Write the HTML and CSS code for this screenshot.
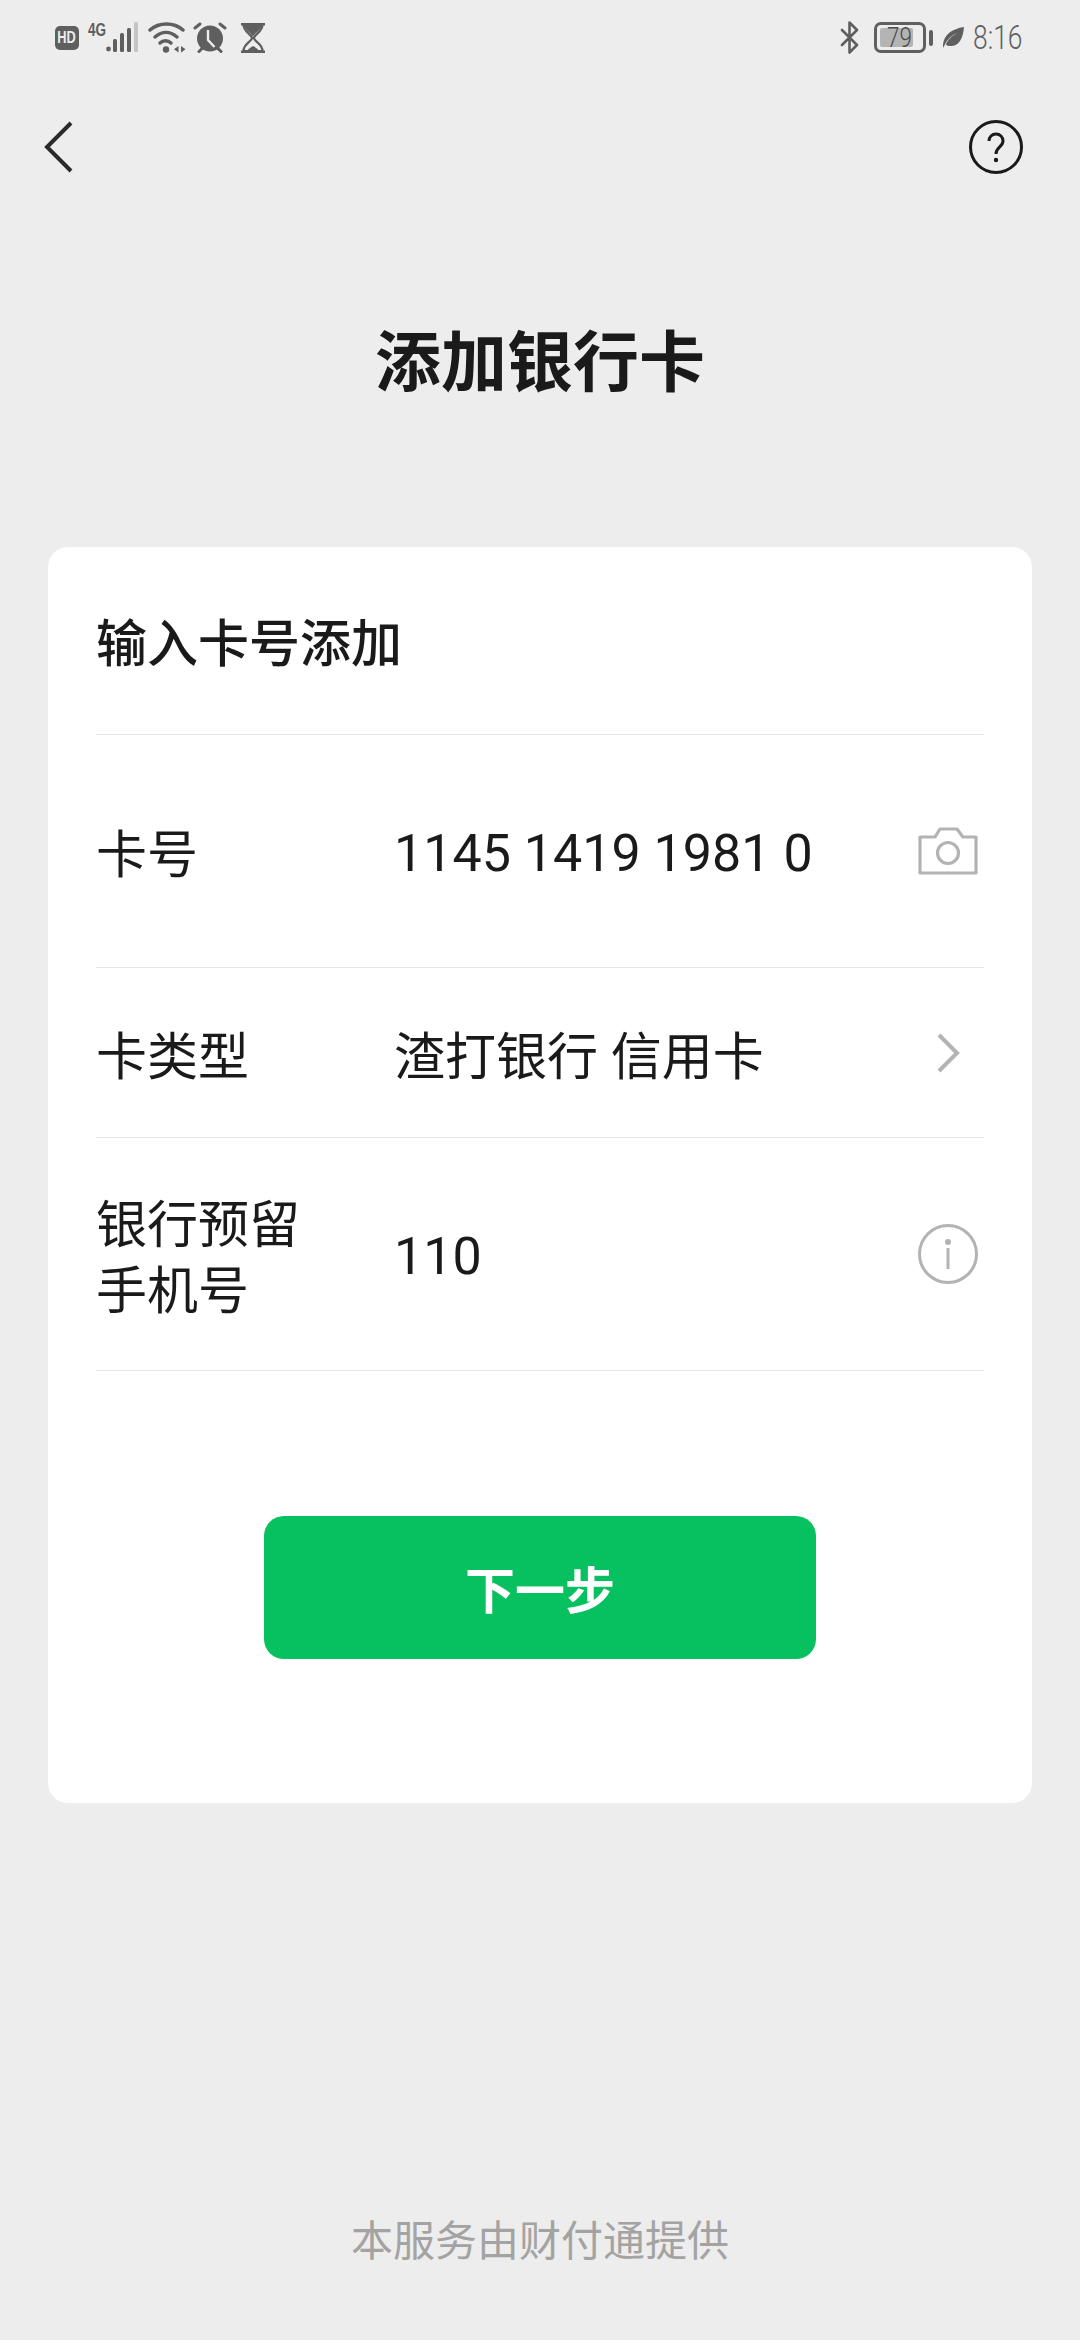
FILE: index.html
```html
<!DOCTYPE html>
<html lang="zh-CN">
<head>
  <meta charset="UTF-8">
  <meta name="viewport" content="width=device-width, initial-scale=1.0">
  <title>添加银行卡</title>
  <link rel="stylesheet" href="styles.css">
</head>
<body>
  <div class="status-bar">
    <div class="status-left">
      <div class="hd-badge"><span class="hd-text">HD</span></div>
      <div class="signal">
        <span class="net-text">4G</span>
        <svg width="32" height="31" viewBox="0 0 32 31">
          <circle cx="2.500" cy="27" r="2.400" fill="#5f5f5f"/>
          <rect x="7" y="17" width="4" height="13" rx="1.500" fill="#5f5f5f"/>
          <rect x="14" y="11" width="4" height="19" rx="1.500" fill="#5f5f5f"/>
          <rect x="21" y="6" width="4" height="24" rx="1.500" fill="#5f5f5f"/>
          <rect x="28" y="0" width="4" height="30" rx="1.500" fill="#c4c4c4"/>
        </svg>
      </div>
      <svg class="icon-wifi" width="38" height="31" viewBox="0 0 38 31">
        <path d="M2 8C11 0 26 0 35 8M7 15C14 9 22 9 29 15M12 21C15 18 20 18 23 21" fill="none" stroke="#5f5f5f" stroke-width="3.400" stroke-linecap="round"/>
        <circle cx="18" cy="27.500" r="3.200" fill="#5f5f5f"/>
        <path d="M30.500 24v6.500l-4.500-3.200zM33 24v6.500l4.500-3.200z" fill="#5f5f5f"/>
      </svg>
      <svg class="icon-alarm" width="34" height="31" viewBox="0 0 34 31">
        <circle cx="17" cy="16.500" r="13" fill="#5f5f5f"/>
        <path d="M15 8v10l6.500 7" fill="none" stroke="#ededed" stroke-width="2.400"/>
        <path d="M2 6l5-4M32 6l-5-4M6 29.500l3-3M28 29.500l-3-3" stroke="#5f5f5f" stroke-width="3" stroke-linecap="round"/>
      </svg>
      <svg class="icon-glass" width="24" height="30" viewBox="0 0 24 30">
        <path d="M0 1.200h24M0 28.800h24" stroke="#5f5f5f" stroke-width="2.400"/>
        <path d="M2.500 2c0 6 6 8 8.500 12.500v1c-2.500 4.500-8.500 6-8.500 12.500h19c0-6.500-6-8-8.500-12.500v-1C15.500 10 21.500 8 21.500 2z" fill="none" stroke="#5f5f5f" stroke-width="2.200"/>
        <path d="M3 2h18c-1 5-6 7-9 11.500C9 9 4 7 3 2zM6 28c1-2 4-4 6-5 2 1 5 3 6 5z" fill="#5f5f5f"/>
      </svg>
    </div>
    <div class="status-right">
      <svg class="icon-bt" width="20" height="33" viewBox="0 0 20 33">
        <path d="M2 9l15 15-7.500 7.500v-30L17 9 2 24" fill="none" stroke="#5f5f5f" stroke-width="2.600" stroke-linejoin="round" stroke-linecap="round"/>
      </svg>
      <div class="battery">
        <div class="battery-body">
          <div class="battery-level"></div>
          <span class="battery-num">79</span>
        </div>
        <div class="battery-cap"></div>
      </div>
      <svg class="icon-leaf" width="21" height="21" viewBox="0 0 22 22">
        <path d="M22 0C21 12 17 20 8 20 6 20 4 19.500 3 18 7 11 11 8 16 6 10 8 5 12 1.500 19.500L0 22C-1 10 8 2 22 0z" fill="#5f5f5f"/>
      </svg>
      <span class="status-time">8:16</span>
    </div>
  </div>

  <div class="nav-bar">
    <svg width="30" height="54" viewBox="0 0 30 54">
      <path d="M27 3L3 27l24 24" fill="none" stroke="#2a2a2a" stroke-width="4"/>
    </svg>
    <svg width="54" height="54" viewBox="0 0 54 54">
      <circle cx="27" cy="27" r="25.500" fill="none" stroke="#1a1a1a" stroke-width="3"/>
      <path d="M20 21c0-4 3-7 7-7s7 3 7 7c0 6-7 6-7 13" fill="none" stroke="#1a1a1a" stroke-width="3"/>
      <circle cx="27" cy="40" r="2.200" fill="#1a1a1a"/>
    </svg>
  </div>

  <h1 class="page-title">添加银行卡</h1>

  <div class="card">
    <div class="card-header">输入卡号添加</div>

    <div class="form-row row-number">
      <span class="row-label">卡号</span>
      <span class="row-value">1145 1419 1981 0</span>
      <svg class="row-icon" width="60" height="48" viewBox="0 0 60 48">
        <path d="M2 10h15l5-8h17l6 8h13v36H2z" fill="none" stroke="#b3b3b3" stroke-width="3.200" stroke-linejoin="round"/>
        <circle cx="30" cy="26" r="10.500" fill="none" stroke="#b3b3b3" stroke-width="3.200"/>
      </svg>
    </div>

    <div class="form-row row-type">
      <span class="row-label">卡类型</span>
      <span class="row-value value-text">渣打银行 信用卡</span>
      <svg class="row-icon" width="60" height="40" viewBox="0 0 60 40">
        <path d="M21 2l18 18-18 18" fill="none" stroke="#b3b3b3" stroke-width="4"/>
      </svg>
    </div>

    <div class="form-row row-phone">
      <span class="row-label">银行预留<br>手机号</span>
      <span class="row-value">110</span>
      <svg class="row-icon" width="60" height="60" viewBox="0 0 60 60">
        <circle cx="30" cy="30" r="28.500" fill="none" stroke="#b3b3b3" stroke-width="3"/>
        <circle cx="30" cy="18" r="3" fill="#b3b3b3"/>
        <rect x="28.500" y="24" width="3" height="21" fill="#b3b3b3"/>
      </svg>
    </div>

    <div class="btn-wrap">
      <div class="next-button">下一步</div>
    </div>
  </div>

  <div class="footer-note">本服务由财付通提供</div>
</body>
</html>
```

FILE: styles.css
```css
:root {
  --bg-gray: #ededed;
  --text-dark: #1a1a1a;
  --icon-gray: #5f5f5f;
  --divider: #e6e6e6;
  --wechat-green: #07c160;
}

body {
  margin: 0;
  width: 1080px;
  height: 2340px;
  background-color: var(--bg-gray);
  color: var(--text-dark);
  font-family: "Noto Sans CJK SC", Roboto, sans-serif;
  overflow: hidden;
}

.status-bar {
  display: flex;
  justify-content: space-between;
  align-items: center;
  height: 75px;
  padding: 0 56px 0 55px;
}

.status-left,
.status-right {
  display: flex;
  align-items: center;
}

.hd-badge {
  display: flex;
  align-items: center;
  justify-content: center;
  width: 24px;
  height: 24px;
  background: var(--icon-gray);
  border-radius: 5px;
}

.hd-text {
  font-family: "Liberation Sans", sans-serif;
  font-size: 16px;
  font-weight: 700;
  line-height: 16px;
  color: #ededed;
  transform: scaleX(0.8);
}

.signal {
  display: flex;
  align-items: flex-start;
  height: 31px;
  margin-left: 9px;
}

.net-text {
  width: 18px;
  font-family: "Liberation Sans", sans-serif;
  font-size: 18px;
  font-weight: 700;
  line-height: 16px;
  color: var(--icon-gray);
  white-space: nowrap;
  transform: scaleX(0.75);
  transform-origin: left;
}

.icon-wifi { margin-left: 10px; }
.icon-alarm { margin-left: 7px; }
.icon-glass { margin-left: 14px; }

.icon-bt { margin-right: 14px; }

.battery {
  display: flex;
  align-items: center;
  margin-right: 10px;
}

.battery-body {
  position: relative;
  box-sizing: border-box;
  width: 52px;
  height: 31px;
  border: 3px solid var(--icon-gray);
  border-radius: 7px;
}

.battery-level {
  width: 33px;
  height: 19px;
  margin: 3px;
  background: #b4b4b4;
  border-radius: 2px;
}

.battery-num {
  position: absolute;
  left: 10px;
  top: 0;
  font-family: Roboto, sans-serif;
  font-size: 28px;
  font-weight: 300;
  line-height: 25px;
  color: #4a4a4a;
  transform: scaleX(0.8);
  transform-origin: left;
}

.battery-cap {
  width: 4px;
  height: 16px;
  margin-left: 3px;
  background: var(--icon-gray);
  border-radius: 2px;
}

.status-time {
  width: 51px;
  margin-left: 9px;
  font-family: Roboto, sans-serif;
  font-size: 33px;
  font-weight: 300;
  color: var(--icon-gray);
  white-space: nowrap;
  transform: scaleX(0.8);
  transform-origin: left;
}

.nav-bar {
  display: flex;
  justify-content: space-between;
  align-items: center;
  height: 56px;
  margin-top: 44px;
  padding: 0 57px 0 44px;
}

.page-title {
  margin: 136px 0 0;
  font-size: 66px;
  font-weight: 700;
  line-height: 92px;
  text-align: center;
  color: var(--text-dark);
}

.card {
  box-sizing: border-box;
  height: 1256px;
  margin: 144px 48px 0;
  padding: 0 48px;
  background: white;
  border-radius: 20px;
}

.card-header {
  box-sizing: border-box;
  display: flex;
  align-items: center;
  height: 188px;
  padding-bottom: 2px;
  font-size: 51px;
  font-weight: 500;
  border-bottom: 1px solid var(--divider);
}

.form-row {
  display: flex;
  align-items: center;
  border-bottom: 1px solid var(--divider);
  font-size: 51px;
}

.row-number { height: 232px; }
.row-type { height: 169px; }
.row-phone { height: 232px; }

.row-label {
  width: 298px;
  flex-shrink: 0;
  line-height: 66px;
}

.row-value {
  flex: 1;
  padding-top: 5px;
  font-family: Roboto, "Noto Sans CJK SC", sans-serif;
  font-size: 52px;
}

.value-text {
  padding-top: 0;
  font-size: 51px;
}

.row-icon {
  flex-shrink: 0;
  margin-right: 6px;
}

.btn-wrap {
  display: flex;
  justify-content: center;
  padding-top: 145px;
}

.next-button {
  display: flex;
  align-items: center;
  justify-content: center;
  width: 552px;
  height: 143px;
  padding-bottom: 2px;
  box-sizing: border-box;
  background: var(--wechat-green);
  border-radius: 20px;
  color: white;
  font-size: 50px;
  font-weight: 700;
}

.footer-note {
  margin-top: 405px;
  font-size: 42px;
  line-height: 60px;
  text-align: center;
  color: #a3a3a3;
}
```
